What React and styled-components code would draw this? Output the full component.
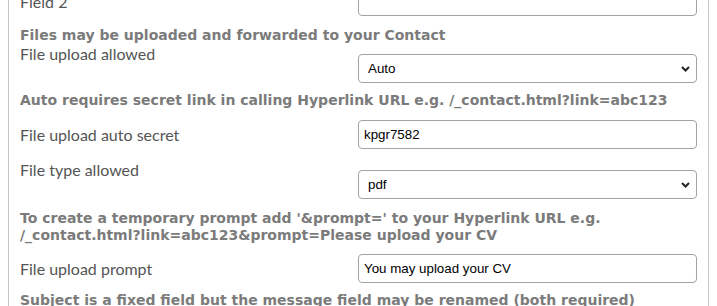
import React from "react";
import styled, { createGlobalStyle } from "styled-components";

const GlobalStyle = createGlobalStyle`
  body {
    margin: 0;
    background: #fff;
    overflow: hidden;
  }
`;

const Panel = styled.div`
  margin: -14px 8px 0;
  width: 677px;
  padding: 0 11px 20px;
  border: 1px solid #c4c4c4;
`;

const Heading = styled.div`
  margin-top: ${(p) => p.$gap ?? 10}px;
  font-family: "DejaVu Sans", Verdana, sans-serif;
  font-weight: bold;
  font-size: 14px;
  line-height: 17px;
  color: #7b7b7b;
`;

const Row = styled.div`
  display: grid;
  grid-template-columns: 338px 1fr;
  align-items: ${(p) => (p.$top ? "start" : "center")};
  margin-top: ${(p) => p.$gap ?? 10}px;
`;

const Label = styled.label`
  font-family: Lato, "Noto Sans", sans-serif;
  font-size: 16px;
  line-height: 20px;
  color: #555;
`;

const Control = styled.div`
  position: relative;
  padding-top: ${(p) => p.$offset ?? 0}px;
`;

const TextInput = styled.input`
  display: block;
  width: 100%;
  height: 29px;
  box-sizing: border-box;
  padding: 0 5px;
  border: 1px solid #a2a2a2;
  border-radius: 4px;
  font-family: "Liberation Sans", Arial, sans-serif;
  font-size: 13.333px;
  color: #000;
  outline: none;
`;

const Select = styled.select`
  display: block;
  width: 100%;
  height: 29px;
  box-sizing: border-box;
  padding: 0 24px 0 9px;
  border: 1px solid #a2a2a2;
  border-radius: 4px;
  background: #fff;
  appearance: none;
  font-family: "Liberation Sans", Arial, sans-serif;
  font-size: 13.333px;
  color: #000;
  outline: none;
`;

const Chevron = styled.svg`
  position: absolute;
  right: 7px;
  bottom: 11px;
  pointer-events: none;
`;

function SelectBox({ value, options }) {
  return (
    <>
      <Select defaultValue={value}>
        {options.map((o) => (
          <option key={o}>{o}</option>
        ))}
      </Select>
      <Chevron width="9" height="6" viewBox="0 0 9 6">
        <polyline
          points="1,1 4.5,4.5 8,1"
          fill="none"
          stroke="#222"
          strokeWidth="2"
        />
      </Chevron>
    </>
  );
}

export default function App() {
  return (
    <>
      <GlobalStyle />
      <Panel>
        <Row $gap={0}>
          <Label>Field 2</Label>
          <Control>
            <TextInput defaultValue="" />
          </Control>
        </Row>

        <Heading $gap={11}>Files may be uploaded and forwarded to your Contact</Heading>
        <Row $top $gap={0}>
          <Label>File upload allowed</Label>
          <Control $offset={10}>
            <SelectBox value="Auto" options={["No", "Yes", "Auto"]} />
          </Control>
        </Row>

        <Heading $gap={9}>
          Auto requires secret link in calling Hyperlink URL e.g. /_contact.html?link=abc123
        </Heading>
        <Row $gap={11}>
          <Label>File upload auto secret</Label>
          <Control>
            <TextInput defaultValue="kpgr7582" />
          </Control>
        </Row>

        <Row $top $gap={11}>
          <Label>File type allowed</Label>
          <Control $offset={10}>
            <SelectBox value="pdf" options={["pdf", "doc", "jpg", "any"]} />
          </Control>
        </Row>

        <Heading $gap={11}>
          To create a temporary prompt add {"'&prompt='"} to your Hyperlink URL e.g.
          <br />
          /_contact.html?link=abc123&amp;prompt=Please upload your CV
        </Heading>
        <Row $gap={10}>
          <Label>File upload prompt</Label>
          <Control>
            <TextInput defaultValue="You may upload your CV" />
          </Control>
        </Row>

        <Heading $gap={9}>
          Subject is a fixed field but the message field may be renamed (both required)
        </Heading>
      </Panel>
    </>
  );
}
